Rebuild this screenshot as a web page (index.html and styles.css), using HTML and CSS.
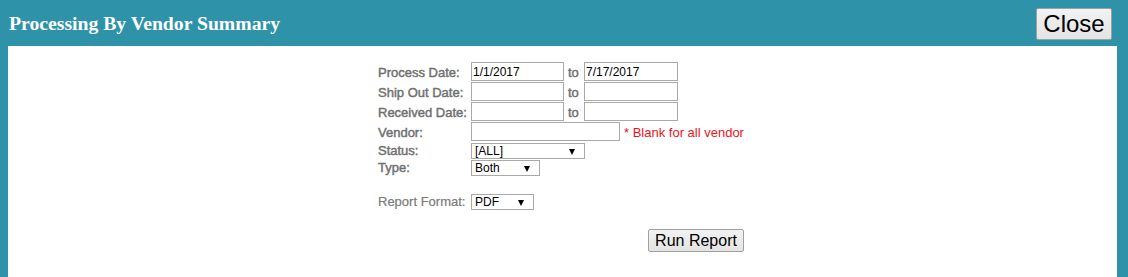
FILE: index.html
```html
<!DOCTYPE html>
<html>
<head>
<meta charset="utf-8">
<link rel="stylesheet" href="styles.css">
</head>
<body>
<div class="dialog">
  <div class="titlebar">
    <h1 class="title">Processing By Vendor Summary</h1>
    <button class="btn btn-close">Close</button>
  </div>
  <div class="content">
    <div class="form">
      <div class="row">
        <label class="lbl">Process Date:</label>
        <input class="inp date" value="1/1/2017">
        <span class="to">to</span>
        <input class="inp date2" value="7/17/2017">
      </div>
      <div class="row">
        <label class="lbl">Ship Out Date:</label>
        <input class="inp date" value="">
        <span class="to">to</span>
        <input class="inp date2" value="">
      </div>
      <div class="row">
        <label class="lbl">Received Date:</label>
        <input class="inp date" value="">
        <span class="to">to</span>
        <input class="inp date2" value="">
      </div>
      <div class="row">
        <label class="lbl">Vendor:</label>
        <input class="inp vendor" value="">
        <span class="note">* Blank for all vendor</span>
      </div>
      <div class="row row-sel">
        <label class="lbl">Status:</label>
        <span class="sel sel-status">[ALL]</span>
      </div>
      <div class="row row-sel">
        <label class="lbl">Type:</label>
        <span class="sel sel-type">Both</span>
      </div>
      <div class="row row-sel row-format">
        <label class="lbl lbl-light">Report Format:</label>
        <span class="sel sel-format">PDF</span>
      </div>
      <div class="actions">
        <button class="btn btn-run">Run Report</button>
      </div>
    </div>
  </div>
</div>
</body>
</html>
```
FILE: styles.css
```css
html, body {
  margin: 0;
  padding: 0;
}
body {
  background: #2e92a8;
  width: 1128px;
  height: 277px;
  overflow: hidden;
  font-family: "Liberation Sans", Arial, sans-serif;
}
.dialog {
  display: flex;
  flex-direction: column;
  height: 277px;
}
.titlebar {
  height: 46px;
  display: flex;
  align-items: flex-start;
  justify-content: space-between;
  padding: 0 16px 0 9px;
}
.title {
  margin: 12px 0 0 0;
  font-family: "Liberation Serif", "Times New Roman", serif;
  font-weight: bold;
  font-size: 19.7px;
  line-height: 23px;
  color: #fff;
}
.btn {
  font-family: "Liberation Sans", Arial, sans-serif;
  color: #000;
  background: linear-gradient(#f2f2f2, #e3e3e3);
  border: 1px solid #a0a0a0;
  border-radius: 2px;
  padding: 0;
  box-sizing: border-box;
}
.btn-close {
  margin-top: 8px;
  width: 76px;
  height: 32px;
  font-size: 24px;
}
.content {
  flex: 1;
  background: #fff;
  margin: 0 11px 0 8px;
}
.form {
  margin-left: 368px;
  padding-top: 16px;
  width: 380px;
}
.row {
  display: flex;
  align-items: center;
  height: 20px;
}
.lbl {
  width: 95px;
  flex: none;
  box-sizing: border-box;
  padding-left: 2px;
  font-size: 13px;
  color: #707070;
  -webkit-text-stroke: 0.45px #707070;
  white-space: nowrap;
}
.lbl-light {
  color: #7a7a7a;
  -webkit-text-stroke: 0.2px #7a7a7a;
}
.inp {
  box-sizing: border-box;
  height: 19px;
  margin: 0 0 1px 0;
  border: 1px solid #a9a9a9;
  padding: 0 1px;
  font-family: "Liberation Sans", Arial, sans-serif;
  font-size: 12px;
  color: #000;
  background: #fff;
  outline: none;
}
.date { width: 93px; }
.date2 { width: 94px; }
.vendor { width: 149px; }
.to {
  width: 20px;
  box-sizing: border-box;
  padding-left: 4px;
  font-size: 13px;
  color: #707070;
  -webkit-text-stroke: 0.45px #707070;
}
.note {
  margin-left: 4px;
  font-size: 13px;
  color: #ee1122;
}
.row-sel {
  height: 17px;
}
.sel {
  position: relative;
  box-sizing: border-box;
  height: 16px;
  border: 1px solid #a9a9a9;
  padding: 0 0 0 3px;
  font-size: 12px;
  line-height: 14px;
  color: #000;
  background: #fff;
}
.sel::after {
  content: "";
  position: absolute;
  right: 9px;
  top: 5px;
  border-left: 3.5px solid transparent;
  border-right: 3.5px solid transparent;
  border-top: 6px solid #000;
}
.sel-status { width: 114px; }
.sel-type { width: 69px; }
.sel-format { width: 63px; }
.row-format {
  margin-top: 17px;
}
.actions {
  display: flex;
  justify-content: flex-end;
  padding-top: 19px;
  padding-right: 12px;
}
.btn-run {
  width: 96px;
  height: 23px;
  font-size: 16px;
}
```
